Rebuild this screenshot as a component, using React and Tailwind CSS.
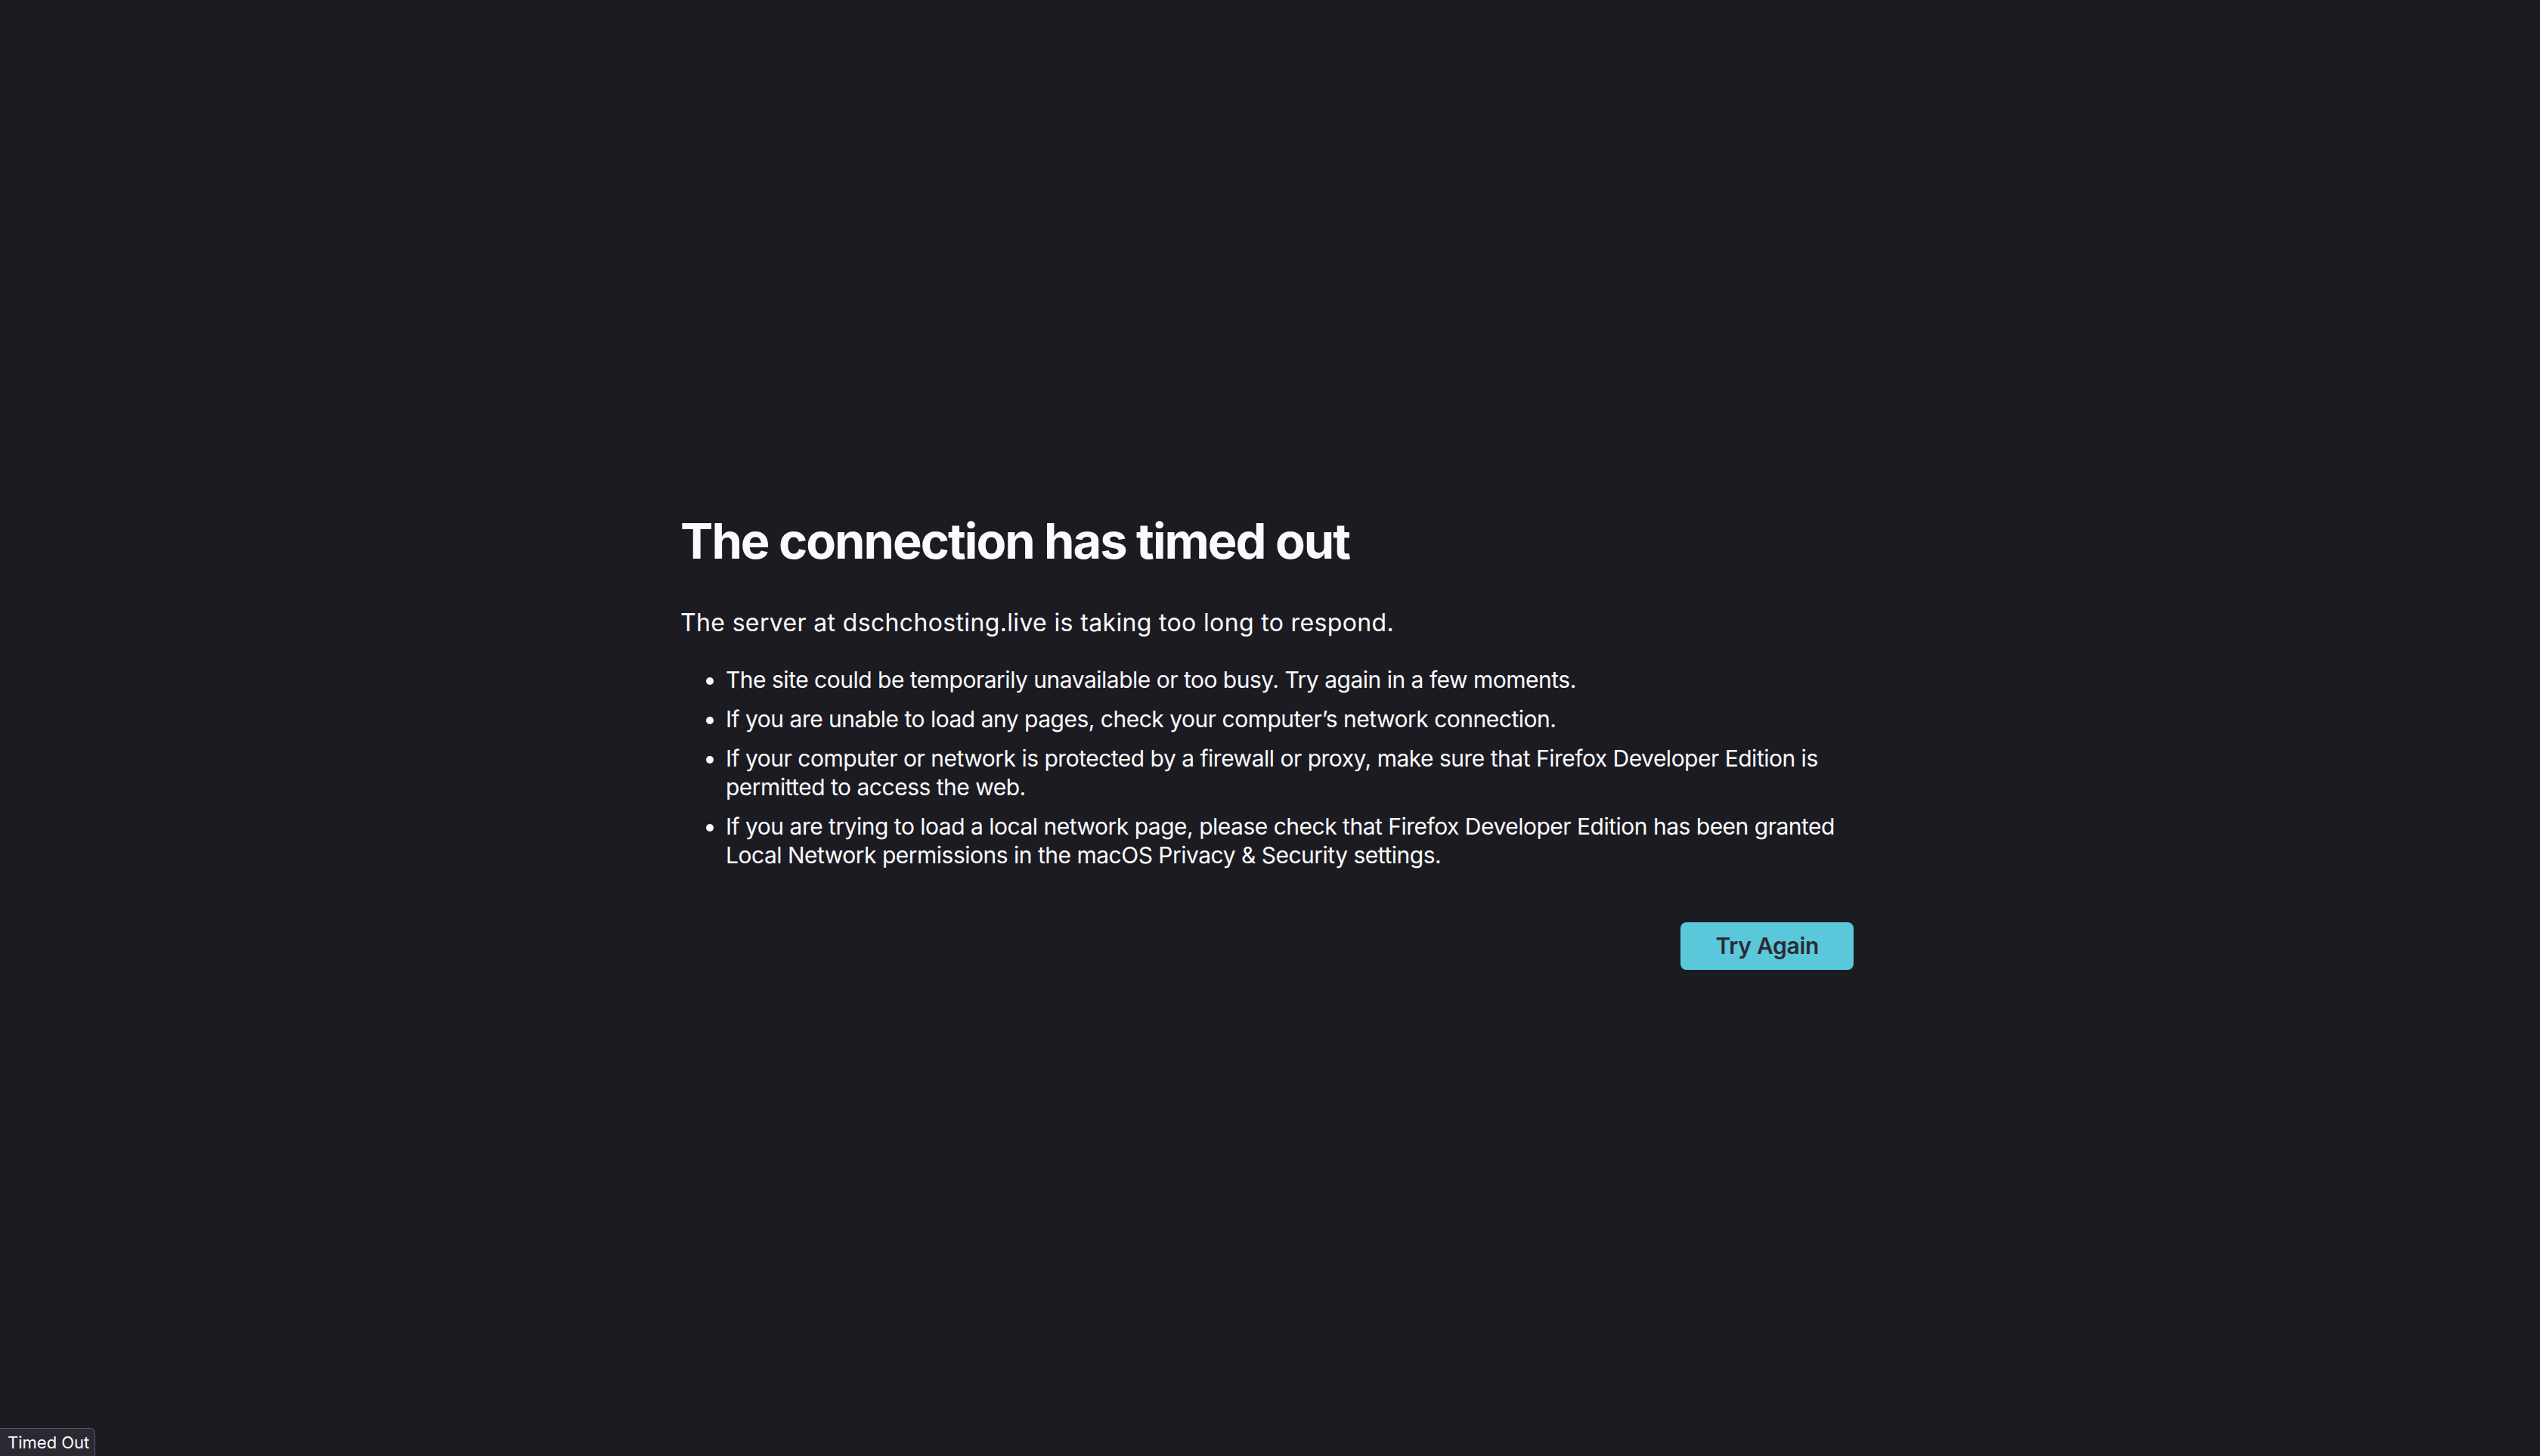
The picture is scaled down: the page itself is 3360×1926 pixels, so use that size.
export default function App() {
  return (
    <div className="min-h-screen w-full bg-[#1c1b22] relative font-['Inter',sans-serif] text-[#fbfbfe]">
      <div className="mx-auto w-[1560px] pt-[676px]">
        <h1 className="m-0 text-[65px] leading-[79px] font-bold tracking-[-2px]">The connection has timed out</h1>
        <p className="mt-[49px] text-[32px] leading-[40px] tracking-[0.35px]">The server at dschchosting.live is taking too long to respond.</p>
        <ul className="mt-[36px] list-disc pl-[60px] text-[30px] leading-[38px] tracking-[-0.5px] flex flex-col gap-[14px]">
          <li>The site could be temporarily unavailable or too busy. Try again in a few moments.</li>
          <li>If you are unable to load any pages, check your computer’s network connection.</li>
          <li>If your computer or network is protected by a firewall or proxy, make sure that Firefox Developer Edition is permitted to access the web.</li>
          <li>If you are trying to load a local network page, please check that Firefox Developer Edition has been granted Local Network permissions in the macOS Privacy &amp; Security settings.</li>
        </ul>
        <div className="mt-[70px] flex justify-end pr-[8px]">
          <button className="h-[63px] px-[46px] rounded-[8px] bg-[#5ac8da] text-[#2b2a33] text-[30px] font-semibold tracking-[-0.3px]">Try Again</button>
        </div>
      </div>
      <div className="absolute left-0 bottom-0 h-[37px] w-[126px] bg-[#2b2a33] border-t border-r border-[#5b5b66] rounded-tr-[6px] text-[22px] leading-[36px] pl-[10px] text-[#fbfbfe]">Timed Out</div>
    </div>
  );
}
